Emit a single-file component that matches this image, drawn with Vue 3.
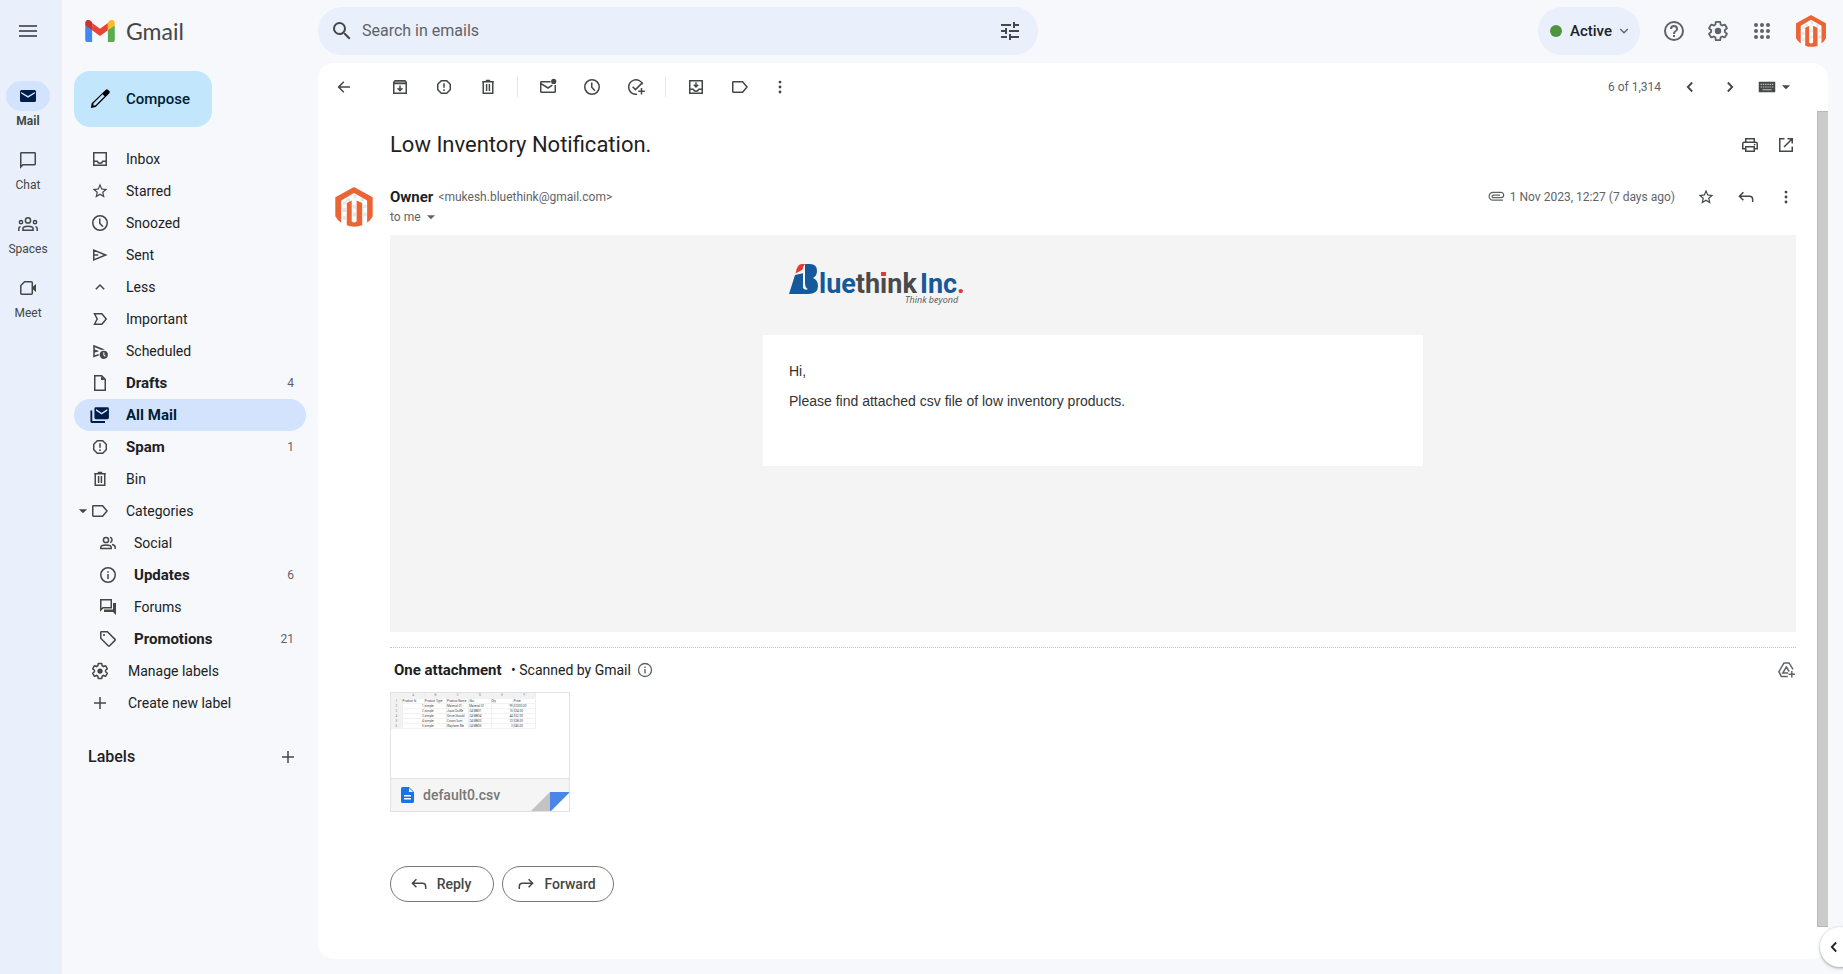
<script setup>
import { h, ref } from 'vue'

// Stroke icons sit on a 20 unit grid, filled ones on a 24 unit grid.
const GEAR =
  'M19.43 12.98c.04-.32.07-.64.07-.98 0-.34-.03-.66-.07-.98l2.11-1.65c.19-.15.24-.42.12-.64l-2-3.46c-.09-.16-.26-.25-.44-.25-.06 0-.12.01-.17.03l-2.49 1c-.52-.4-1.08-.73-1.69-.98l-.38-2.65C14.46 2.18 14.25 2 14 2h-4c-.25 0-.46.18-.49.42l-.38 2.65c-.61.25-1.17.59-1.69.98l-2.49-1c-.06-.02-.12-.03-.18-.03-.17 0-.34.09-.43.25l-2 3.46c-.13.22-.07.49.12.64l2.11 1.65c-.04.32-.07.65-.07.98 0 .33.03.66.07.98l-2.11 1.65c-.19.15-.24.42-.12.64l2 3.46c.09.16.26.25.44.25.06 0 .12-.01.17-.03l2.49-1c.52.4 1.08.73 1.69.98l.38 2.65c.03.24.24.42.49.42h4c.25 0 .46-.18.49-.42l.38-2.65c.61-.25 1.17-.59 1.69-.98l2.49 1c.06.02.12.03.18.03.17 0 .34-.09.43-.25l2-3.46c.12-.22.07-.49-.12-.64l-2.11-1.65z'
const stroke = {
  inbox: '<path d="M3.75 3.75h12.5v12.5H3.75zM3.75 12.25h3.5c.4 1.3 1.4 2 2.75 2s2.35-.7 2.75-2h3.5"/>',
  clock: '<circle cx="10" cy="10" r="7.25"/><path d="M9.75 5.5v4.8l3.2 3.4"/>',
  send: '<path d="M3.75 5.1v9.8L15.7 10zM3.75 10h4.5"/>',
  up: '<path d="M5.8 12.2L10 8l4.2 4.2"/>',
  down: '<path d="M5.8 7.8L10 12l4.2-4.2"/>',
  left: '<path d="M12.2 5.5L7.8 10l4.4 4.5" stroke-width="1.8"/>',
  right: '<path d="M7.8 5.5l4.4 4.5-4.4 4.5" stroke-width="1.8"/>',
  important: '<path d="M4.5 4.75h7.4l4.3 5.25-4.3 5.25H4.5L7.2 10z"/>',
  draft: '<path d="M4.75 2.75h6.9l3.6 3.6v10.9H4.75z"/><path d="M11 3v4h4z" fill="currentColor" stroke="none"/>',
  spam: '<path d="M7.3 3.75h5.4l3.55 3.55v5.4l-3.55 3.55H7.3L3.75 12.7V7.3zM10 6.3v4.5M10 12.3v1.6"/>',
  bin: '<path d="M4.2 4.75h11.6M7.8 3.6h4.4M5.25 4.75v11.5h9.5V4.75M8.6 7v7M11.4 7v7"/>',
  label: '<path d="M3.4 4.75h9.2L17 10l-4.4 5.25H3.4q-.65 0-.65-.65V5.4q0-.65.65-.65z"/>',
  info: '<circle cx="10" cy="10" r="7.25"/><path d="M10 9v5M10 6.2v1.6"/>',
  plus: '<path d="M10 4v12M4 10h12"/>',
  chat: '<path d="M2.75 17V3.4q0-.65.65-.65h13.2q.65 0 .65.65v10.7q0 .65-.65.65H5z"/>',
  spaces: '<circle cx="10" cy="6.4" r="2.6"/><circle cx="3" cy="8.2" r="1.6"/><circle cx="17" cy="8.2" r="1.6"/><path d="M4.9 16.2v-1.5c0-1.7 2.6-2.5 5.1-2.5s5.1.8 5.1 2.5v1.5zM.8 16.9v-2.4q0-1.6 1.8-1.8M19.2 16.9v-2.4q0-1.6-1.8-1.8"/>',
  meet: '<path d="M6.6 3.75h6.8q.9 0 .9.9v10.7q0 .9-.9.9H3.7q-.9 0-.9-.9V7.5z"/><path d="M14.5 9l3.5-3v8l-3.5-3z" fill="currentColor" stroke="none"/>',
  people: '<circle cx="8" cy="7" r="2.6"/><path d="M2.8 15.6v-1.3c0-1.6 2.6-2.3 5.2-2.3s5.2.7 5.2 2.3v1.3zM12 4.2a2.8 2.8 0 0 1 0 5.4M14 11.6c1.8.4 3.2 1.2 3.2 2.7v1.8"/>',
  forum: '<path d="M2.75 13V2.75h10.5v8H5z"/><path d="M15 6h3v12l-3-3H6v-2.6h9z" fill="currentColor" stroke="none"/>',
  tag: '<path d="M2.75 3.4q0-.65.65-.65h6l7.6 7.6q.5.5 0 1l-5.6 5.6q-.5.5-1 0L2.75 9.3z"/><circle cx="6" cy="6" r="1.1" fill="currentColor" stroke="none"/>',
  back: '<path d="M16 10H4.8M9.8 4.8L4.6 10l5.2 5.2"/>',
  archive: '<path d="M3.75 5.6l1.3-1.85h9.9l1.3 1.85v10.65H3.75zM3.75 6.4h12.5M10 8.5v5M7.6 11.2l2.4 2.4 2.4-2.4"/><path d="M5 4h10l1 2H4z" fill="currentColor" fill-opacity=".5" stroke="none"/>',
  unread: '<path d="M12.6 4.75H3.4q-.65 0-.65.65v9.2q0 .65.65.65h13.2q.65 0 .65-.65V8M3 6.6l7 4.4 4.4-2.8"/><circle cx="15.7" cy="4.4" r="2.6" fill="currentColor" stroke="none"/>',
  task: '<path d="M16.6 7.2A7.25 7.25 0 1 0 11 17.2M6.6 9.7l2.9 2.9 7.2-7.2M15.5 11v6.6M12.2 14.3h6.6" />',
  move: '<path d="M3.75 3.75h12.5v12.5H3.75zM3.75 12.25h3.5c.4 1.3 1.4 2 2.75 2s2.35-.7 2.75-2h3.5M10 5.2v4.6M7.8 7.8l2.2 2.2 2.2-2.2"/>',
  print: '<path d="M5.75 7V3.75h8.5V7M5.5 13.75H2.75v-5q0-1.5 1.5-1.5h11.5q1.5 0 1.5 1.5v5H14.5M5.75 11.75h8.5v4.5h-8.5z"/><circle cx="14.6" cy="9.6" r=".9" fill="currentColor" stroke="none"/>',
  open: '<path d="M8.5 3.75H3.75v12.5h12.5V11.5M11.5 3.75h4.75V8.5M16 4L8 12"/>',
  reply: '<path d="M16.7 15v-2.6q0-3.2-3.2-3.2H3.8M7.4 5.2l-4 4 4 4"/>',
  forward: '<path d="M3.3 15v-2.6q0-3.2 3.2-3.2h9.7M12.6 5.2l4 4-4 4"/>',
  clip: '<path d="M17 13.2H7a3.9 3.9 0 0 1 0-7.800h8a2.600 2.600 0 0 1 0 5.300H7.400a1.300 1.300 0 0 1 0-2.600H14" stroke-width="1.2"/>',
  drive: '<path d="M17 9.3L13 2.9H8L2.9 11.7 5.3 16.4h6.5M10.5 6.7L6.8 13h5.4M10.3 6.7l2.8 4.8M15.8 11v6.4M12.6 14.2H19"/>',
}
const filled = {
  menu: '<path d="M3 18h18v-2H3zm0-5h18v-2H3zm0-7v2h18V6z"/>',
  search: '<path d="M15.5 14h-.79l-.28-.27A6.47 6.47 0 0 0 16 9.5 6.5 6.5 0 1 0 9.5 16c1.61 0 3.09-.59 4.23-1.57l.27.28v.79l5 4.99L20.49 19zm-6 0a4.5 4.5 0 1 1 0-9 4.5 4.5 0 0 1 0 9z"/>',
  tune: '<path d="M3 17v2h6v-2zM3 5v2h10V5zm10 16v-2h8v-2h-8v-2h-2v6zM7 9v2H3v2h4v2h2V9zm14 4v-2H11v2zm-6-4h2V7h4V5h-4V3h-2z"/>',
  help: '<path d="M11 18h2v-2h-2zm1-16a10 10 0 1 0 0 20 10 10 0 0 0 0-20zm0 18a8 8 0 1 1 0-16 8 8 0 0 1 0 16zm0-14a4 4 0 0 0-4 4h2c0-1.1.9-2 2-2s2 .9 2 2c0 2-3 1.75-3 5h2c0-2.25 3-2.5 3-5a4 4 0 0 0-4-4z"/>',
  gear: `<path d="${GEAR}" fill="none" stroke="currentColor" stroke-width="2"/><circle cx="12" cy="12" r="3.5"/>`,
  apps: [6, 12, 18].map(y => [6, 12, 18].map(x => `<circle cx="${x}" cy="${y}" r="2"/>`).join('')).join(''),
  star: '<path d="M22 9.24l-7.19-.62L12 2 9.19 8.63 2 9.24l5.46 4.73L5.82 21 12 17.27 18.18 21l-1.63-7.03zM12 15.4l-3.76 2.27 1-4.28-3.32-2.88 4.38-.38L12 6.1l1.71 4.04 4.38.38-3.32 2.88 1 4.28z"/>',
  mail: '<path d="M4.2 4.8h15.6q1.8 0 1.8 1.8v10.8q0 1.8-1.8 1.8H4.2q-1.8 0-1.8-1.8V6.6q0-1.8 1.8-1.8zm-.4 2.3v2l8.2 4.9 8.2-4.9v-2L12 12z" fill-rule="evenodd"/>',
  allmail: '<path d="M7 2.8h14q1.7 0 1.7 1.7v10.8q0 1.7-1.7 1.7H7q-1.7 0-1.7-1.7V4.5Q5.3 2.8 7 2.8zm.2 2.1v2L14 11.4l6.8-4.5v-2L14 9.3z" fill-rule="evenodd"/><path d="M.5 6.5h2.2v12.8H18v2.2H2.2Q.5 21.5.5 19.8z"/>',
  scheduled: '<path d="M3 3.5L18.5 10l-4.5.7L5 7v3l5 1.6v1L5 14v3.5l5-1.5.5 2L3 20.5z"/><path d="M17 11.5a5.5 5.5 0 1 0 0 11 5.5 5.5 0 0 0 0-11zm-.6 2.2h1.4v3.2l1.9 1.9-1 1-2.3-2.3z" fill-rule="evenodd"/>',
  pencil: '<path d="M18.4 1.8q1.1-1.1 2.2 0l1.6 1.6q1.1 1.1 0 2.2L7.3 20.8 2 21.8l.9-5.2zM14.8 6.9L4.8 17v2h2L17 9.1z" fill-rule="evenodd"/>',
  more: '<circle cx="12" cy="5.4" r="1.9"/><circle cx="12" cy="12" r="1.9"/><circle cx="12" cy="18.6" r="1.9"/>',
  caret: '<path d="M5 9h14l-7 7z"/>',
  keyboard: '<path d="M1 5h22v14H1z"/><path d="M3.5 8.5h17M3.5 12h17" stroke="#fff" stroke-width="1.6" stroke-dasharray="1.8 1.2" fill="none" opacity=".7"/><path d="M6 15.7h12" stroke="#fff" stroke-width="1.3" opacity=".7"/>',
}
const Icon = ({ name, size = 20 }) =>
  name in stroke
    ? h('svg', { viewBox: '0 0 20 20', width: size, height: size, fill: 'none', stroke: 'currentColor', 'stroke-width': 1.5, 'aria-hidden': true, innerHTML: stroke[name] })
    : h('svg', { viewBox: '0 0 24 24', width: size, height: size, fill: 'currentColor', 'aria-hidden': true, innerHTML: filled[name] })
Icon.props = ['name', 'size']

const Brand = ({ size }) =>
  h('svg', {
    viewBox: '0 0 116 122', width: size, height: size, role: 'img', 'aria-label': 'Owner',
    innerHTML:
      '<path d="M58 0l57 31v59Q96 122 58 122T1 90V31z" fill="#fff"/>' +
      '<path d="M24 44h10v10H24zM34 34h12v10H34zM56 24h10v10H56zM78 34h10v10H78zM86 54h10v10H86zM22 64h12v12H22zM54 54h10v12H54zM54 78h10v12H54zM86 78h10v12H86zM24 88h10v12H24z" fill="#e6e6e6"/>' +
      '<path d="M58 0l57 31v58q-6 12-17 20V41L58 18 19 41v68Q7 101 1 89V31z" fill="#ea6435"/>' +
      '<path d="M36 49l15-8v64q7 7 15 0V41l17 8v68q-24 9-47 0z" fill="#ea6435"/>',
  })
Brand.props = ['size']

const rail = [
  { label: 'Mail', icon: 'mail', on: true },
  { label: 'Chat', icon: 'chat' },
  { label: 'Spaces', icon: 'spaces' },
  { label: 'Meet', icon: 'meet' },
]
const nav = [
  { label: 'Inbox', icon: 'inbox' },
  { label: 'Starred', icon: 'star', size: 18 },
  { label: 'Snoozed', icon: 'clock' },
  { label: 'Sent', icon: 'send' },
  { label: 'Less', icon: 'up' },
  { label: 'Important', icon: 'important' },
  { label: 'Scheduled', icon: 'scheduled', size: 18 },
  { label: 'Drafts', icon: 'draft', count: 4, bold: true },
  { label: 'All Mail', icon: 'allmail', bold: true, on: true },
  { label: 'Spam', icon: 'spam', count: 1, bold: true },
  { label: 'Bin', icon: 'bin' },
  { label: 'Categories', icon: 'label', caret: true },
  { label: 'Social', icon: 'people', sub: true },
  { label: 'Updates', icon: 'info', count: 6, bold: true, sub: true },
  { label: 'Forums', icon: 'forum', sub: true },
  { label: 'Promotions', icon: 'tag', count: 21, bold: true, sub: true },
  { label: 'Manage labels', icon: 'gear', size: 18, util: true },
  { label: 'Create new label', icon: 'plus', util: true },
]
const tools = [
  [['archive', 'Archive'], ['spam', 'Report spam'], ['bin', 'Delete']],
  [['unread', 'Mark as unread'], ['clock', 'Snooze'], ['task', 'Add to tasks']],
  [['move', 'Move to'], ['label', 'Labels']],
]
const sheet = [
  ['1', 'Product Id', 'Product Type', 'Product Name', 'Sku', 'Qty', 'Price'],
  ['2', '1', 'simple', 'Material 01 -', 'Material 01 -', '99', '$1000.00'],
  ['3', '2', 'simple', 'Joust Duffle', '24-MB01', '15', '$34.00'],
  ['4', '3', 'simple', 'Strive Should', '24-MB04', '44', '$32.00'],
  ['5', '4', 'simple', 'Crown Sum', '24-MB03', '23', '$38.00'],
  ['6', '5', 'simple', 'Wayfarer Me', '24-MB05', '3', '$45.00'],
]
const query = ref('')
</script>

<template>
  <div class="app">
    <nav class="rail" aria-label="Apps">
      <button class="burger" aria-label="Main menu"><Icon name="menu" :size="24" /></button>
      <a v-for="r in rail" :key="r.label" href="#" class="rail-item" :class="{ on: r.on }">
        <span class="pill"><Icon :name="r.icon" /></span>
        <span>{{ r.label }}</span>
      </a>
    </nav>

    <aside class="side">
      <a href="#" class="logo">
        <svg viewBox="0 0 90 67" width="30" height="22" aria-hidden="true">
          <path d="M0 16v45q0 6 6 6h15V30z" fill="#4285f4" />
          <path d="M90 16v45q0 6-6 6H69V30z" fill="#5bab4f" />
          <path d="M21 9l24 18L69 9v22L45 49 21 31z" fill="#ea4335" />
          <path d="M0 17V9C0 1 9-3 16 2l5 5v24z" fill="#c5352e" />
          <path d="M90 17V9C90 1 81-3 74 2l-5 5v24z" fill="#f9bb2d" />
        </svg>
        <span>Gmail</span>
      </a>
      <button class="compose"><Icon name="pencil" :size="22" /><span>Compose</span></button>
      <ul class="nav">
        <li v-for="n in nav" :key="n.label">
          <a href="#" :class="{ on: n.on, bold: n.bold, sub: n.sub, util: n.util }">
            <span v-if="n.caret" class="tri"><Icon name="caret" :size="14" /></span>
            <span class="ico"><Icon :name="n.icon" :size="n.size || 20" /></span>
            <span class="txt">{{ n.label }}</span>
            <span v-if="n.count" class="count">{{ n.count }}</span>
          </a>
        </li>
      </ul>
      <div class="labels">
        <h2>Labels</h2>
        <button aria-label="Create new label"><Icon name="plus" /></button>
      </div>
    </aside>

    <div class="content">
      <header class="top">
        <form class="search" role="search" @submit.prevent>
          <button aria-label="Search"><Icon name="search" :size="24" /></button>
          <input v-model="query" type="text" placeholder="Search in emails" aria-label="Search in emails" />
          <button aria-label="Show search options"><Icon name="tune" :size="24" /></button>
        </form>
        <div class="account">
          <button class="status"><i class="dot"></i><span>Active</span><Icon name="down" :size="18" /></button>
          <button class="sq" aria-label="Support"><Icon name="help" :size="24" /></button>
          <button class="sq" aria-label="Settings"><Icon name="gear" :size="22" /></button>
          <button class="sq" aria-label="Google apps"><Icon name="apps" :size="24" /></button>
          <button class="me" aria-label="Account"><Brand :size="32" /></button>
        </div>
      </header>

      <main class="panel">
        <div class="toolbar">
          <button class="t back" aria-label="Back"><Icon name="back" /></button>
          <div v-for="(g, i) in tools" :key="i" class="group">
            <button v-for="[icon, label] in g" :key="icon" class="t" :aria-label="label"><Icon :name="icon" /></button>
          </div>
          <button class="t more" aria-label="More"><Icon name="more" :size="18" /></button>
          <div class="pager">
            <span>6 of 1,314</span>
            <button aria-label="Newer"><Icon name="left" /></button>
            <button aria-label="Older"><Icon name="right" /></button>
            <button class="kbd" aria-label="Input tools"><Icon name="keyboard" :size="18" /><Icon name="caret" :size="14" /></button>
          </div>
        </div>

        <div class="scroll">
          <article class="thread">
            <div class="subject">
              <h1>Low Inventory Notification.</h1>
              <div class="acts">
                <button aria-label="Print"><Icon name="print" /></button>
                <button aria-label="Open in new window"><Icon name="open" /></button>
              </div>
            </div>

            <div class="sender">
              <Brand class="avatar" :size="40" />
              <div class="who">
                <div class="from"><b>Owner</b><span>&lt;mukesh.bluethink@gmail.com&gt;</span></div>
                <button class="tome">to me <Icon name="caret" :size="14" /></button>
              </div>
              <div class="meta">
                <Icon name="clip" />
                <time>1 Nov 2023, 12:27 (7 days ago)</time>
                <button aria-label="Star"><Icon name="star" :size="18" /></button>
                <button aria-label="Reply"><Icon name="reply" /></button>
                <button aria-label="More options"><Icon name="more" :size="18" /></button>
              </div>
            </div>

            <section class="mail">
              <div class="letter">
                <svg class="brandmark" viewBox="0 0 174 44" width="174" height="44" role="img" aria-label="BluethinkInc. Think beyond">
                  <path d="M0 31L6 12l9-2V1h6q7 0 7 7 0 5-4 7 5 2 5 8 0 8-10 8z" fill="#15599a" />
                  <path d="M6.5 10.500Q8 1 13 1h4l-4 6z" fill="#e23b35" />
                  <path d="M16 1v19q0 5 3 6-3 2-5-1V4z" fill="#f4f4f4" />
                  <text x="30" y="30" font-family="Roboto, sans-serif" font-size="27" font-weight="700" fill="#15599a"><tspan>lue</tspan><tspan fill="#4a4a4a">think</tspan></text>
                  <text x="131" y="30" font-family="Roboto, sans-serif" font-size="27" font-weight="700" fill="#15599a"><tspan>Inc</tspan><tspan fill="#e23b35">.</tspan></text>
                  <path d="M92 9h5v4h-5z" fill="#e23b35" />
                  <text x="116" y="40" font-family="Open Sans, sans-serif" font-style="italic" font-size="9" fill="#555">Think beyond</text>
                </svg>
                <div class="card">
                  <p>Hi,</p>
                  <p>Please find attached csv file of low inventory products.</p>
                </div>
              </div>
            </section>

            <section class="attach">
              <div class="attach-head">
                <b>One attachment</b>
                <span>&nbsp;• Scanned by Gmail</span>
                <Icon name="info" :size="18" />
                <button aria-label="Add to Drive"><Icon name="drive" /></button>
              </div>
              <a href="#" class="file">
                <table class="sheet">
                  <thead>
                    <tr><th></th><th v-for="c in 'ABCDEF'" :key="c">{{ c }}</th></tr>
                  </thead>
                  <tbody>
                    <tr v-for="r in sheet" :key="r[0]">
                      <td v-for="(c, i) in r" :key="i">{{ c }}</td>
                    </tr>
                  </tbody>
                </table>
                <span class="file-name">
                  <svg viewBox="0 0 13 16" width="13" height="16" aria-hidden="true">
                    <path d="M1.5 0H8l5 5v9.5q0 1.5-1.5 1.5h-10Q0 16 0 14.5v-13Q0 0 1.5 0z" fill="#1a73e8" />
                    <path d="M8 1v4h4zM3 8h7v1.4H3zM3 11h7v1.4H3z" fill="#fff" />
                  </svg>
                  default0.csv
                </span>
                <svg class="fold" viewBox="0 0 40 20" width="40" height="20" aria-hidden="true">
                  <path d="M20 20h20V0z" fill="#fff" />
                  <path d="M0 20L20 0v20z" fill="#c3c3c3" />
                  <path d="M20 0h20L20 20z" fill="#4a86e8" />
                </svg>
              </a>
            </section>

            <div class="replies">
              <button><Icon name="reply" /><span>Reply</span></button>
              <button><Icon name="forward" /><span>Forward</span></button>
            </div>
          </article>
          <div class="bar"></div>
        </div>
      </main>
    </div>

    <button class="drawer" aria-label="Show side panel"><Icon name="left" /></button>
  </div>
</template>

<style>
html,
body {
  margin: 0;
  background: #f6f8fc;
}
</style>

<style scoped>
* {
  box-sizing: border-box;
}
.app {
  position: relative;
  display: flex;
  min-height: 100vh;
  overflow: hidden;
  font-family: Roboto, 'Liberation Sans', sans-serif;
  font-size: 14px;
  line-height: 20px;
  color: #202124;
  background: #f6f8fc;
}
button {
  display: inline-flex;
  align-items: center;
  justify-content: center;
  padding: 0;
  border: 0;
  background: none;
  font: inherit;
  color: #444746;
}
a {
  color: inherit;
  text-decoration: none;
}
svg {
  flex: none;
  display: block;
}
.rail {
  display: flex;
  flex: none;
  flex-direction: column;
  align-items: center;
  width: 62px;
  padding: 11px 6px 0 0;
  background: #e9f0fb;
}
.burger {
  width: 40px;
  height: 40px;
  margin-bottom: 30px;
  color: #5f6368;
}
.rail-item {
  display: flex;
  flex-direction: column;
  align-items: center;
  height: 64px;
  font-size: 12px;
  color: #444746;
}
.pill {
  display: flex;
  align-items: center;
  justify-content: center;
  width: 44px;
  height: 30px;
  border-radius: 15px;
}
.rail-item.on {
  font-weight: 700;
}
.on .pill {
  color: #001d49;
  background: #d3e3fd;
}
.side {
  flex: none;
  width: 256px;
  padding: 0 12px;
}
.logo {
  display: flex;
  align-items: center;
  gap: 11px;
  height: 63px;
  padding: 0 0 2px 11px;
  font-family: Lato, sans-serif;
  font-size: 23px;
  color: #444746;
}
.compose {
  justify-content: flex-start;
  gap: 15px;
  width: 138px;
  height: 56px;
  margin: 8px 0 16px;
  padding-left: 15px;
  border-radius: 16px;
  font-size: 15px;
  font-weight: 500;
  color: #001d35;
  background: #c2e7fc;
}
.compose svg {
  color: #000;
}
.nav {
  margin: 0;
  padding: 0;
  list-style: none;
}
.nav a {
  position: relative;
  display: flex;
  align-items: center;
  height: 32px;
  padding: 0 12px 0 16px;
  border-radius: 16px;
}
.nav a.on {
  background: #d3e3fd;
  color: #001d35;
}
.nav a.sub {
  padding-left: 24px;
}
.ico {
  display: flex;
  justify-content: center;
  width: 20px;
  margin-right: 16px;
  color: #444746;
}
.on .ico {
  color: #001d49;
}
.util .ico {
  margin-right: 18px;
}
.tri {
  position: absolute;
  left: 2px;
  color: #444746;
}
.txt {
  flex: 1;
}
.bold .txt {
  font-size: 15px;
  font-weight: 700;
}
.count {
  font-size: 12px;
  color: #5f6368;
}
.labels {
  display: flex;
  align-items: center;
  justify-content: space-between;
  margin-top: 28px;
  padding: 0 8px 0 14px;
}
.labels h2 {
  margin: 0;
  font-size: 16px;
  font-weight: 500;
}
.content {
  display: flex;
  flex: 1;
  flex-direction: column;
  min-width: 0;
  padding-right: 15px;
}
.top {
  display: flex;
  align-items: center;
  justify-content: space-between;
  height: 63px;
  padding-bottom: 1px;
}
.search {
  display: flex;
  align-items: center;
  width: 48%;
  max-width: 720px;
  height: 48px;
  padding: 0 8px 0 4px;
  border-radius: 24px;
  background: #e9f0fb;
}
.search button {
  width: 40px;
  height: 40px;
}
.search input {
  flex: 1;
  min-width: 0;
  padding: 0;
  border: 0;
  outline: 0;
  background: none;
  font: inherit;
  font-size: 16px;
  color: #202124;
}
.search input::placeholder {
  color: #5f6368;
  opacity: 1;
}
.account {
  display: flex;
  align-items: center;
}
.status {
  justify-content: flex-start;
  gap: 8px;
  width: 102px;
  height: 48px;
  margin-right: 12px;
  padding-left: 12px;
  border-radius: 24px;
  background: #e9f0fb;
  font-size: 15px;
  font-weight: 500;
  color: #202124;
}
.status svg {
  margin-left: -5px;
  color: #5f6368;
}
.dot {
  width: 12px;
  height: 12px;
  border-radius: 50%;
  background: #4f9540;
}
.sq {
  width: 44px;
  height: 40px;
  color: #5f6368;
}
.me {
  width: 32px;
  margin: 0 1px 0 11px;
}
.panel {
  display: flex;
  flex: 1;
  flex-direction: column;
  margin-bottom: 15px;
  border-radius: 16px;
  background: #fff;
}
.toolbar {
  display: flex;
  align-items: center;
  height: 48px;
  padding: 0 31px 0 4px;
}
.t {
  width: 44px;
  height: 32px;
}
.back {
  margin-right: 12px;
}
.group {
  display: flex;
  align-items: center;
  height: 20px;
}
.group + .group {
  margin-left: 7px;
  padding-left: 8px;
  border-left: 1px solid #e4e6e8;
}
.more {
  width: 36px;
}
.pager {
  display: flex;
  align-items: center;
  margin-left: auto;
  font-size: 12px;
  color: #5f6368;
}
.pager span {
  margin-right: 9px;
}
.pager button {
  width: 40px;
}
.pager .kbd {
  justify-content: flex-end;
  gap: 3px;
  width: 47px;
  padding-right: 4px;
}
.scroll {
  display: flex;
  flex: 1;
}
.thread {
  flex: 1;
  min-width: 0;
  padding: 0 21px 0 72px;
}
.bar {
  width: 11px;
  margin-bottom: 32px;
  border: 1px solid #b8b8b8;
  border-right: 0;
  background: #cbcbcb;
}
.subject {
  display: flex;
  align-items: center;
  justify-content: space-between;
  height: 68px;
}
.subject h1 {
  margin: 0;
  font-size: 22px;
  font-weight: 400;
  line-height: 28px;
  color: #1f1f1f;
}
.acts {
  display: flex;
  gap: 16px;
}
.sender {
  display: flex;
  height: 56px;
  padding-top: 8px;
}
.avatar {
  margin: 0 16px 0 -56px;
}
.who {
  flex: 1;
  font-size: 12px;
  color: #5f6368;
}
.from {
  display: flex;
  gap: 5px;
}
.who b {
  font-size: 15px;
  color: #1f1f1f;
}
.tome {
  gap: 3px;
  color: #5f6368;
}
.meta {
  display: flex;
  align-items: center;
  height: 20px;
  font-size: 12px;
  color: #5f6368;
}
.meta time {
  margin: 0 11px 0 4px;
}
.meta button {
  width: 40px;
}
.meta button:last-child {
  margin-right: -10px;
}
.mail {
  min-height: 397px;
  padding-top: 28px;
  background: #f4f4f4;
  font-family: 'Liberation Sans', Arial, sans-serif;
  color: #333;
}
.letter {
  width: 47%;
  max-width: 660px;
  margin: 0 auto;
}
.brandmark {
  margin: 0 0 28px 26px;
}
.card {
  min-height: 131px;
  padding: 26px;
  background: #fff;
}
.card p {
  margin: 0 0 10px;
}
.attach {
  margin-top: 15px;
  border-top: 1px dotted #c4c4c4;
}
.attach-head {
  display: flex;
  align-items: center;
  height: 44px;
  padding-left: 4px;
}
.attach-head b {
  font-size: 15px;
}
.attach-head svg {
  color: #5f6368;
}
.attach-head span {
  margin: 0 5px 0 6px;
}
.attach-head button {
  margin-left: auto;
}
.file {
  position: relative;
  display: flex;
  flex-direction: column;
  justify-content: space-between;
  width: 180px;
  height: 120px;
  border: 1px solid #e2e2e2;
  overflow: hidden;
}
.sheet {
  table-layout: fixed;
  width: 145px;
  border-collapse: collapse;
  font-size: 3px;
  line-height: 4px;
  color: #444;
}
.sheet th,
.sheet td {
  height: 5px;
  padding: 0;
  border-right: 1px solid #eee;
  border-bottom: 1px solid #f2f2f2;
  font-weight: 400;
  white-space: nowrap;
}
.sheet td:not(:first-child) {
  text-align: left;
}
.sheet th:first-child {
  width: 11px;
}
.sheet th,
.sheet td:first-child {
  background: #f2f2f2;
  text-align: center;
  color: #888;
}
.sheet tr:nth-child(n + 2) td:nth-child(6),
.sheet tr:nth-child(n + 2) td:nth-child(2) {
  text-align: right;
}
.file-name {
  display: flex;
  align-items: center;
  gap: 9px;
  height: 33px;
  padding: 0 0 1px 10px;
  border-top: 1px solid #e2e2e2;
  background: #f5f5f5;
  font-weight: 500;
  color: #777;
}
.fold {
  position: absolute;
  right: -1px;
  bottom: -1px;
}
.replies {
  display: flex;
  gap: 8px;
  margin-top: 54px;
}
.replies button {
  gap: 8px;
  width: 104px;
  height: 36px;
  padding-right: 4px;
  border: 1px solid #747775;
  border-radius: 18px;
  font-weight: 500;
}
.replies button + button {
  width: 112px;
}
.drawer {
  position: absolute;
  right: -17px;
  bottom: 7px;
  justify-content: flex-start;
  width: 40px;
  height: 40px;
  padding-left: 4px;
  border-radius: 20px;
  background: #fff;
  box-shadow: 0 1px 3px rgba(60, 64, 67, 0.5);
  color: #202124;
}
</style>
